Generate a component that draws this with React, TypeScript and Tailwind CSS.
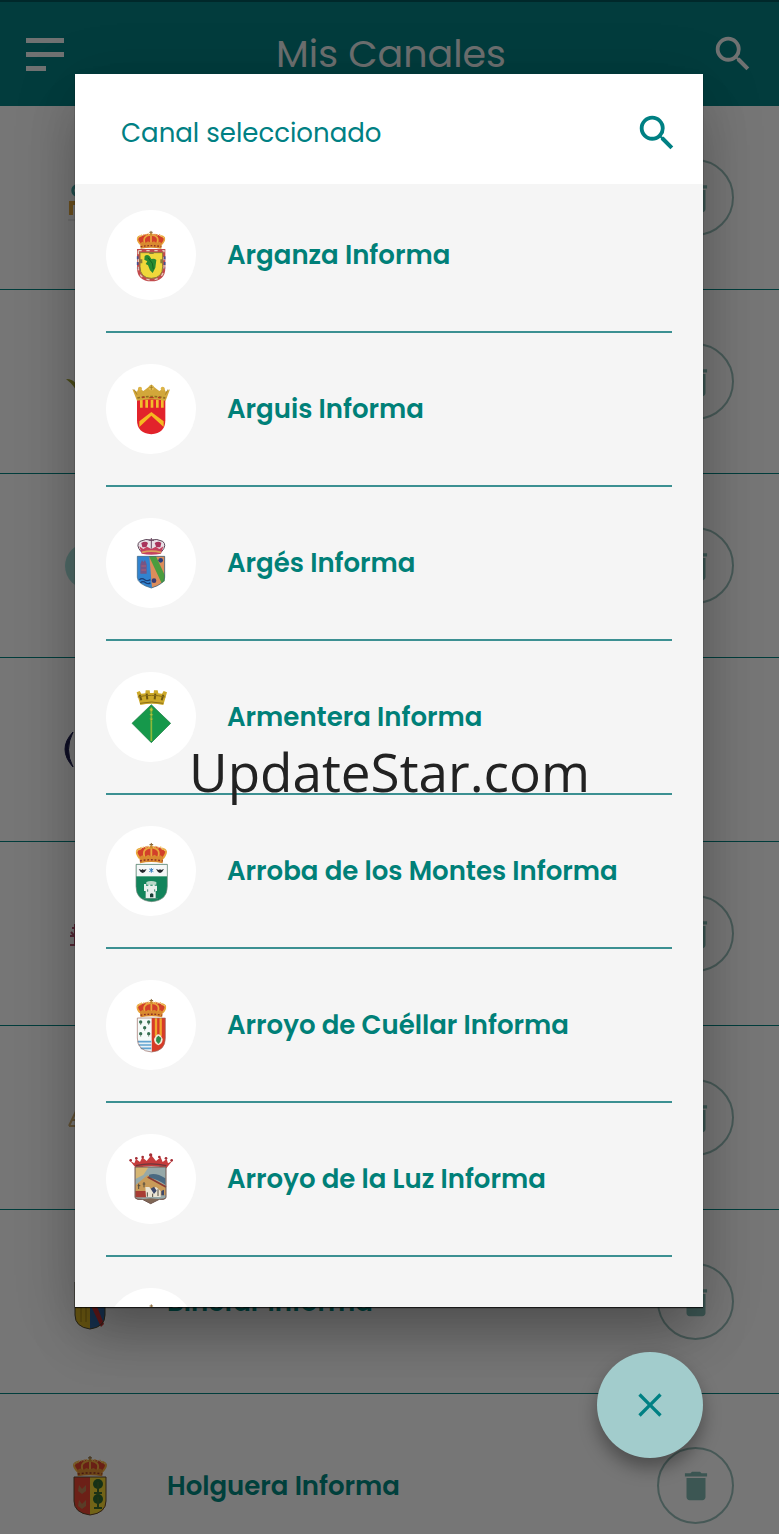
import type { ReactNode } from "react";
import { MdClose, MdDelete, MdSearch } from "react-icons/md";

function RoyalCrown({ x, y, w = 86, h = 56 }: { x: number; y: number; w?: number; h?: number }) {
  return (
    <svg x={x} y={y} width={w} height={h} viewBox="0 0 86 56" preserveAspectRatio="none">
      <path d="M10 40C-4 22 2 15 16 15c10-6 18-6 27-3 9-3 17-3 27 3 14 0 20 7 6 25z" fill="#d2402a" />
      <path d="M11 41C-3 24 2 17 15 16M25 40C18 22 26 15 40 13M61 40c7-18-1-25-15-27M75 41c14-17 9-24-4-25M43 13v27" fill="none" stroke="#e9a63c" strokeWidth="5" />
      <path d="M2 23l7-6 8-5 8 1 8-3 10 2 10-2 8 3 8-1 8 5 7 6" fill="none" stroke="#efc065" strokeWidth="4" strokeDasharray="4 3" />
      <path d="M43 0v12M38 5h10" stroke="#8a6a3c" strokeWidth="3" />
      <circle cx="43" cy="11" r="4" fill="#c98b2e" />
      <path d="M10 38l8-5 8 4 8-5 9 4 9-4 8 5 8-4 8 5-2 16q-31-6-62 0z" fill="#d98a2f" />
      <path d="M12 48q31-6 62 0" fill="none" stroke="#8e2f24" strokeWidth="4" strokeDasharray="5 5" />
    </svg>
  );
}

function Crest({ top, children }: { top: number; children: ReactNode }) {
  return (
    <svg viewBox={`18 ${top} 270 270`} className="size-full" aria-hidden="true">
      {children}
    </svg>
  );
}

const arganza = (
  <Crest top={33}>
    <RoyalCrown x={110} y={95} />
    <path d="M111 150h85v56q0 40-42 41-43-1-43-41z" fill="#c24a4c" />
    <path d="M115 155h77v49q0 37-38 39-39-2-39-39z" fill="none" stroke="#e3cbb9" strokeWidth="4" strokeDasharray="10 14" />
    <path d="M113 172v36M194 172v36" stroke="#42508f" strokeWidth="5" strokeDasharray="9 8" />
    <path d="M120 161h68v42q0 34-34 35-34-1-34-35z" fill="#f0d83a" stroke="#8c7b3a" strokeWidth="3" />
    <path d="M119 181h8v12h-8zM181 181h8v12h-8zM148 159h13v6h-13z" fill="#8c7b3a" />
    <path d="M134 171q8-6 15 1l5 8q10-3 15 3l-3 23-8 16-8-8-6-15-7-4 5-8-9-5z" fill="#268a32" />
    <path d="M144 176l13 17 3 18" fill="none" stroke="#156521" strokeWidth="3" />
  </Crest>
);

const arguis = (
  <Crest top={30}>
    <path d="M111 135h85v64q0 39-42 42-43-3-43-42z" fill="#e2232b" />
    <path d="M124 137v24M140 137v24M156 137v24M172 137v24M187 137v24" stroke="#f2bd2c" strokeWidth="8" />
    <path d="M118 213l36-34 37 34v-17l-37-28-36 28z" transform="translate(0 6)" fill="#f5b921" />
    <path d="M97 105l14 8 5-12 14 10 9-7 15-12 15 12 9 7 14-10 5 12 13-7-13 34q-43-9-86 0z" fill="#d2a73a" />
    <path d="M112 132q42-9 84 0" fill="none" stroke="#8f6f20" strokeWidth="5" strokeDasharray="8 5" />
    <path d="M148 131h13M174 130l8 2M126 131l8-2" stroke="#b53a22" strokeWidth="4" />
    <circle cx="154" cy="101" r="8" fill="#e3bd52" />
    <circle cx="120" cy="104" r="6" fill="#dcb448" />
    <circle cx="188" cy="104" r="6" fill="#dcb448" />
    <path d="M154 92v16M148 100h12M102 106l9 16M204 106l-8 16" stroke="#94711f" strokeWidth="2" />
  </Crest>
);

const arges = (
  <Crest top={27}>
    <path d="M123 128Q106 108 120 97q18-9 34-4 16-5 34 4 14 11-3 31z" fill="#e8e0e6" stroke="#5c4658" strokeWidth="3" />
    <path d="M124 102q12-8 20 0l-5 13h-12zM164 102q12-8 20 0l-3 13h-12z" fill="#a8345c" />
    <path d="M154 87v32M146 94h16" stroke="#6b4560" strokeWidth="3" />
    <path d="M118 112l12 8 11-7 13 7 13-7 11 7 12-8-7 22q-29 6-58 0z" fill="#c5415f" />
    <path d="M126 130q28-7 57 0" fill="none" stroke="#d9a05c" strokeWidth="5" />
    <path d="M112 142h82v63q0 20-40 32-42-12-42-32z" fill="#3183cf" />
    <path d="M148 142h46v63q0 20-38 31z" fill="#dc8d5b" />
    <path d="M147 142h21l26 56v18l-9 7z" fill="#4a9c3e" />
    <path d="M121 194v-28l5-13 4 6 5-6 5 13v28z" fill="#765584" />
    <path d="M124 171h14M124 183h14" stroke="#b15f70" strokeWidth="3" />
    <circle cx="182" cy="154" r="7" fill="#283f80" />
    <circle cx="162" cy="215" r="7" fill="#383b73" />
    <path d="M118 212q8-6 16 0t17 0M121 221q8-6 16 0t14 0" fill="none" stroke="#1a3c72" strokeWidth="4" />
    <path d="M112 142h82v63q0 20-40 32-42-12-42-32z" fill="none" stroke="#345d79" strokeWidth="2" />
  </Crest>
);

const armentera = (
  <Crest top={23}>
    <path d="M110 84l9-4 5 8 12-1 1-9h12l1 8h11l1-8h11l2 9 11 1 5-8 10 4-11 38q-35-8-69 0z" fill="#cda929" />
    <path d="M119 91l5 17M140 88l2 17M166 88l-2 17M190 91l-5 17" stroke="#6f5711" strokeWidth="6" />
    <path d="M113 98q41-10 83 0M120 117q34-8 70 0" fill="none" stroke="#8a6d16" strokeWidth="3" />
    <path d="M154 121l58 56-58 58-58-58z" fill="#16984b" stroke="#127a3d" strokeWidth="2" />
    <path d="M154 132v98" stroke="#8bb83a" strokeWidth="5" />
    <path d="M154 128l-5 8 5 8 5-8zM149 150l5 6 5-6M149 163l5 6 5-6" fill="#b7c943" stroke="#719c2c" strokeWidth="2" />
  </Crest>
);

const arroba = (
  <Crest top={30}>
    <RoyalCrown x={107} y={80} w={94} h={64} />
    <path d="M108 145h94v66q0 44-47 46-47-2-47-46z" fill="#12845b" />
    <path d="M109 146h92v35h-92z" fill="#f5f7f7" />
    <path d="M116 159l9 3 3-3 3 3 9-3-6 9-6 3-6-3zM168 159l9 3 3-3 3 3 9-3-6 9-6 3-6-3z" fill="#25292e" />
    <path d="M154 156v14M148 159l12 8M160 159l-12 8" stroke="#2f79bd" strokeWidth="3" />
    <path d="M132 204h6v5h7v-5h6v5h7v-5h6v5h7v16h-4v23h-30v-23h-5z" fill="#e8efec" />
    <path d="M139 198q14-6 30 0v8h-30z" fill="#b9d8c9" />
    <path d="M150 244v-9q5-6 10 0v9z" fill="#173e35" />
    <path d="M143 220v7M164 220v7M131 248h43" stroke="#438470" strokeWidth="3" />
    <path d="M108 145h94v66q0 44-47 46-47-2-47-46z" fill="none" stroke="#7d8c82" strokeWidth="2" />
  </Crest>
);

const cuellar = (
  <Crest top={27}>
    <RoyalCrown x={109} y={83} w={90} h={58} />
    <path d="M112 141h84v60q0 39-41 42-43-3-43-42z" fill="#f5faf8" />
    <path d="M155 141h41v60q0 39-41 42z" fill="#d73b27" />
    <path d="M168 141v55M182 141v55" stroke="#f0a62b" strokeWidth="7" />
    <g fill="#347050">
      <circle cx="122" cy="153" r="5" />
      <circle cx="146" cy="153" r="5" />
      <circle cx="134" cy="170" r="5" />
      <circle cx="122" cy="188" r="5" />
      <circle cx="146" cy="188" r="5" />
    </g>
    <path d="M122 153v9M146 153v9M134 170v9M122 188v9M146 188v9" stroke="#4f6a59" strokeWidth="2" />
    <path d="M112 210h42v33q-34-3-42-33z" fill="#e6f0f6" />
    <path d="M113 212h41M116 222h38M122 232h32" stroke="#5fa2d0" strokeWidth="5" />
    <path d="M162 204q13-29 26 0 0 14-13 19-13-5-13-19z" fill="#f4ead9" />
    <path d="M175 194l9 7-3 11-6 7-7-9 1-10z" fill="#2e8b4c" />
    <path d="M112 141h84v60q0 39-41 42-43-3-43-42z" fill="none" stroke="#996a60" strokeWidth="2" />
  </Crest>
);

const luz = (
  <Crest top={24}>
    <path d="M90 104l13 8 5-13 12 9 7-14 13 11 14-17 14 17 14-11 6 14 12-9 4 13 13-8-18 23q-45-13-91 0z" fill="#c63c3c" />
    <g fill="#a52e35">
      <circle cx="92" cy="103" r="4" />
      <circle cx="109" cy="97" r="4" />
      <circle cx="128" cy="93" r="4" />
      <circle cx="152" cy="87" r="5" />
      <circle cx="178" cy="93" r="4" />
      <circle cx="198" cy="97" r="4" />
      <circle cx="215" cy="103" r="4" />
    </g>
    <path d="M107 119q45-11 92 0" fill="none" stroke="#6d383b" strokeWidth="4" />
    <path d="M105 123h93v92q-4 7-20 5l-26 13-25-13q-17 2-22-5z" fill="#96a9a9" />
    <path d="M106 123h40l-16 24-24 12z" fill="#d6b673" />
    <path d="M106 178l36-30 56 32v28h-92z" fill="#c99b59" />
    <path d="M147 146q22-7 49 11v19q-22-16-49-21z" fill="#496a82" />
    <path d="M143 153l55 30" stroke="#8b3a35" strokeWidth="5" />
    <path d="M106 195h33v19h-33z" fill="#a83c33" />
    <path d="M136 183h12l5 7 15-7 14 12v18h-44z" fill="#ece5d5" />
    <path d="M152 188l10-6 8 12-8 10zM184 195l8-4v17h-8z" fill="#3e496b" />
    <path d="M142 199v13M158 203v10M174 190v20M116 173v16M132 168v16M113 179h8M128 174h8" stroke="#544c3f" strokeWidth="3" />
    <path d="M105 216q18 6 47 1 31 5 46-1-4 8-20 4l-26 13-25-13q-17 4-22-4z" fill="#806755" />
    <path d="M105 123h93v92q-4 7-20 5l-26 13-25-13q-17 2-22-5z" fill="none" stroke="#735951" strokeWidth="3" />
  </Crest>
);

const partial = (
  <Crest top={27}>
    <RoyalCrown x={109} y={76} w={90} h={58} />
  </Crest>
);

const channels = [
  { name: "Arganza Informa", crest: arganza },
  { name: "Arguis Informa", crest: arguis },
  { name: "Argés Informa", crest: arges },
  { name: "Armentera Informa", crest: armentera },
  { name: "Arroba de los Montes Informa", crest: arroba },
  { name: "Arroyo de Cuéllar Informa", crest: cuellar },
  { name: "Arroyo de la Luz Informa", crest: luz },
  { name: "", crest: partial },
];

function Emblem({ children }: { children: ReactNode }) {
  return (
    <svg viewBox="0 0 64 64" className="size-16 shrink-0" aria-hidden="true">
      {children}
    </svg>
  );
}

const saved = [
  {
    name: "",
    removable: true,
    emblem: (
      <Emblem>
        <path d="M22 20a5 5 0 1 0 0 9" fill="none" stroke="#429f9d" strokeWidth="3" />
        <path d="M13 49V37h8v12" fill="none" stroke="#d9a13e" strokeWidth="4" />
        <path d="M10 54h30" stroke="#c9c9c9" strokeWidth="1" />
      </Emblem>
    ),
  },
  {
    name: "",
    removable: true,
    emblem: (
      <Emblem>
        <path d="M8 29q7 0 10 5V28l6 4-4 12q-3-8-12-15z" fill="#95962f" />
      </Emblem>
    ),
  },
  {
    name: "",
    removable: true,
    emblem: (
      <Emblem>
        <circle cx="30" cy="32" r="23" fill="#9ed4cf" />
      </Emblem>
    ),
  },
  {
    name: "",
    removable: false,
    emblem: (
      <Emblem>
        <path d="M15 14q-16 17 0 35-9-17 0-35z" fill="#1c1c4a" stroke="#1c1c4a" strokeWidth="1" />
        <path d="M24 22q-7 4-4 9 3 4 1 9" fill="none" stroke="#55557c" strokeWidth="2" />
      </Emblem>
    ),
  },
  {
    name: "",
    removable: true,
    emblem: (
      <Emblem>
        <path d="M14 26h8M17 22v21M12 34h10M12 43h10M13 30l7 8" fill="none" stroke="#a94c68" strokeWidth="2" />
      </Emblem>
    ),
  },
  {
    name: "",
    removable: true,
    emblem: (
      <Emblem>
        <path d="M11 40l9-19v19M14 34h8M11 40h10" fill="none" stroke="#c6a66c" strokeWidth="2" />
      </Emblem>
    ),
  },
  {
    name: "Binéfar Informa",
    removable: true,
    emblem: (
      <Emblem>
        <path d="M17 12h30v33q0 12-15 14-15-2-15-14z" fill="#d1ac22" />
        <path d="M32 12h15v33q0 12-15 14z" fill="#2c629c" />
        <path d="M23 12v40M28 12v40" stroke="#9a7c16" strokeWidth="1" />
        <path d="M34 24l12 30-3 3-9-19z" fill="#c32e2e" />
        <path d="M17 12h30v33q0 12-15 14-15-2-15-14z" fill="none" stroke="#4b4630" strokeWidth="1" />
      </Emblem>
    ),
  },
  {
    name: "Holguera Informa",
    removable: true,
    emblem: (
      <Emblem>
        <RoyalCrown x={15} y={2} w={34} h={21} />
        <path d="M16 23h32v24q0 12-16 14-16-2-16-14z" fill="#d8402e" />
        <path d="M32 23h16v24q0 12-16 14z" fill="#e4c72e" />
        <g fill="#2c622c">
          <circle cx="40" cy="30" r="5" />
          <circle cx="40" cy="45" r="5" />
        </g>
        <path d="M40 28v11M40 43v12M36 39h8M36 54h8" stroke="#3d642a" strokeWidth="2" />
        <path d="M21 31l3 4 4-4v6l-4 3-4-3zM21 46l3 4 4-4v6l-4 3-4-3z" fill="#b27a4f" />
        <path d="M16 23h32v24q0 12-16 14-16-2-16-14z" fill="none" stroke="#5c442c" strokeWidth="1" />
      </Emblem>
    ),
  },
];

function ChannelsPage() {
  return (
    <div className="h-full bg-[#ececec]">
      <header className="flex h-[106px] items-center justify-between border-t-2 border-[#005054] bg-[#04787a] pr-[23px] pl-[26px]">
        <button type="button" aria-label="Menú" className="flex w-[46px] flex-col gap-[9px]">
          <span className="h-[5px] w-[38px] bg-[#e0e4e4]" />
          <span className="h-[5px] w-[38px] bg-[#e0e4e4]" />
          <span className="h-[5px] w-5 bg-[#e0e4e4]" />
        </button>
        <h1 className="text-[38px] leading-[48px] font-normal text-[#d8dede]">Mis Canales</h1>
        <button type="button" aria-label="Buscar canales">
          <MdSearch className="size-[46px] text-[#e0e4e4]" />
        </button>
      </header>
      <ul>
        {saved.map((item, i) => (
          <li key={i} className="flex h-[184px] items-center border-b border-[#007a78] pr-[45px] pl-[58px]">
            {item.emblem}
            <span className="ml-[45px] flex-1 text-[26px] leading-9 font-semibold text-[#008078]">{item.name}</span>
            {item.removable && (
              <button
                type="button"
                aria-label="Eliminar canal"
                className="flex size-[77px] items-center justify-center rounded-full border-2 border-[#8fb3af] text-[#78ada6]"
              >
                <MdDelete className="size-[38px]" />
              </button>
            )}
          </li>
        ))}
      </ul>
    </div>
  );
}

export default function App() {
  return (
    <main className="relative h-screen overflow-hidden font-['Poppins','Inter',sans-serif]">
      <ChannelsPage />

      <div className="absolute inset-0 flex flex-col bg-black/50 pt-[74px] pr-[76px] pb-[76px] pl-[75px]">
        <section
          role="dialog"
          aria-label="Canal seleccionado"
          className="flex min-h-0 flex-1 flex-col bg-[#f5f5f5] shadow-[0_1px_1px_rgba(0,0,0,0.7),0_36px_50px_-10px_rgba(0,0,0,0.25),0_10px_60px_rgba(0,0,0,0.15)]"
        >
          <div className="flex h-[110px] shrink-0 items-center justify-between bg-white pt-2 pr-[23px] pl-[46px] text-[#008083]">
            <h2 className="text-[26px] leading-9 font-normal">Canal seleccionado</h2>
            <button type="button" aria-label="Buscar">
              <MdSearch className="size-[46px]" />
            </button>
          </div>
          <ul className="flex min-h-0 flex-1 flex-col gap-[31px] overflow-hidden px-[31px] pt-[26px]">
            {channels.map((channel, i) => (
              <li key={i} className="shrink-0 border-b-2 border-[#3c9092] pb-[31px]">
                <button type="button" className="flex w-full items-center gap-[31px] text-left">
                  <span className="size-[90px] shrink-0 rounded-full bg-white">{channel.crest}</span>
                  <span className="text-[26px] leading-9 font-semibold whitespace-nowrap text-[#008078]">{channel.name}</span>
                </button>
              </li>
            ))}
          </ul>
        </section>
        <div className="flex shrink-0 justify-end pt-[45px]">
          <button
            type="button"
            aria-label="Cerrar"
            className="flex size-[106px] items-center justify-center rounded-full bg-[#a2cccc] text-[#008083] shadow-[0_10px_18px_rgba(0,0,0,0.35)]"
          >
            <MdClose className="size-10" />
          </button>
        </div>
      </div>

      <p className="pointer-events-none absolute inset-x-0 top-[736px] text-center font-['Open_Sans',sans-serif] text-[53px] leading-[72px] text-[#222222]">
        UpdateStar.com
      </p>
    </main>
  );
}
